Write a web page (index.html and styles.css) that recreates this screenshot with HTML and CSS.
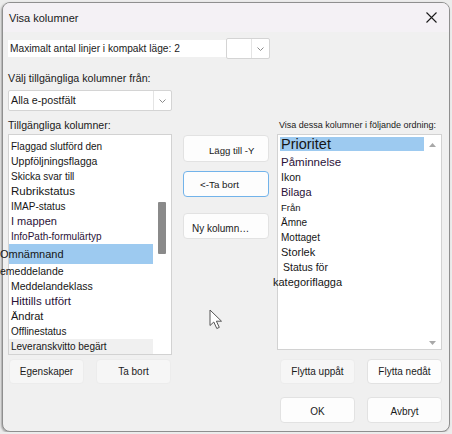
FILE: index.html
```html
<!DOCTYPE html>
<html>
<head>
  <title>Visa kolumner</title>
<link rel="stylesheet" href="styles.css">
</head>
<body>
  <div class="dialog">
    <div class="titlebar">
      <span class="title">Visa kolumner</span>
      <svg class="close" width="11" height="11" viewBox="0 0 11 11">
        <path d="M0.5 0.5 L10.5 10.5 M10.5 0.5 L0.5 10.5" stroke="#1a1a1a" stroke-width="1.1" fill="none"/>
      </svg>
    </div>

    <div class="content">
      <div class="compact-row">
        <span class="compact-label">Maximalt antal linjer i kompakt läge: 2</span>
        <div class="combo combo-small">
          <span class="combo-value"></span>
          <span class="combo-arrow">
            <svg width="7" height="4" viewBox="0 0 7 4"><path d="M0.5 0.5 L3.5 3.5 L6.5 0.5" stroke="#8a8a8a" fill="none"/></svg>
          </span>
        </div>
      </div>

      <div class="field-label">Välj tillgängliga kolumner från:</div>
      <div class="combo combo-wide">
        <span class="combo-value">Alla e-postfält</span>
        <span class="combo-arrow">
          <svg width="7" height="4" viewBox="0 0 7 4"><path d="M0.5 0.5 L3.5 3.5 L6.5 0.5" stroke="#8a8a8a" fill="none"/></svg>
        </span>
      </div>

      <div class="columns">
        <!-- available columns -->
        <div class="col-available">
          <div class="list-label">Tillgängliga kolumner:</div>
          <div class="listbox list-available">
            <div class="list-items">
              <div class="item fs10">Flaggad slutförd den</div>
              <div class="item fs105">Uppföljningsflagga</div>
              <div class="item fs10">Skicka svar till</div>
              <div class="item fs115">Rubrikstatus</div>
              <div class="item fs10">IMAP-status</div>
              <div class="item fs11 tint">I mappen</div>
              <div class="item fs10 tint">InfoPath-formulärtyp</div>
              <div class="item fs11 selected tall overhang">Omnämnand</div>
              <div class="item fs105 overhang">emeddelande</div>
              <div class="item fs105">Meddelandeklass</div>
              <div class="item fs115 tint">Hittills utfört</div>
              <div class="item fs11">Ändrat</div>
              <div class="item fs10">Offlinestatus</div>
              <div class="item fs10 hover">Leveranskvitto begärt</div>
            </div>
            <div class="scrollbar">
              <div class="thumb"></div>
            </div>
          </div>
          <div class="btn-row">
            <button class="btn btn-flat">Egenskaper</button>
            <button class="btn btn-flat">Ta bort</button>
          </div>
        </div>

        <!-- add / remove -->
        <div class="col-actions">
          <button class="btn btn-action btn-add">Lägg till -Y</button>
          <button class="btn btn-action btn-remove">&lt;-Ta bort</button>
          <button class="btn btn-action btn-new">Ny kolumn…</button>
        </div>

        <!-- shown columns -->
        <div class="col-shown">
          <div class="list-label small">Visa dessa kolumner i följande ordning:</div>
          <div class="listbox list-shown">
            <div class="list-items">
              <div class="item big selected">Prioritet</div>
              <div class="item fs115 tint">Påminnelse</div>
              <div class="item fs105">Ikon</div>
              <div class="item fs11 tint">Bilaga</div>
              <div class="item fs95">Från</div>
              <div class="item fs10">Ämne</div>
              <div class="item fs10">Mottaget</div>
              <div class="item fs11">Storlek</div>
              <div class="item fs105 indent">Status för</div>
              <div class="item fs11 overhang-right">kategoriflagga</div>
            </div>
            <div class="scrollbar arrows">
              <svg width="7" height="4" viewBox="0 0 7 4"><path d="M0 4 L3.5 0 L7 4 Z" fill="#a8a8a8"/></svg>
              <svg width="7" height="4" viewBox="0 0 7 4"><path d="M0 0 L3.5 4 L7 0 Z" fill="#a8a8a8"/></svg>
            </div>
          </div>
          <div class="btn-row">
            <button class="btn btn-flat">Flytta uppåt</button>
            <button class="btn">Flytta nedåt</button>
          </div>
          <div class="btn-row footer">
            <button class="btn btn-ok">OK</button>
            <button class="btn btn-ok">Avbryt</button>
          </div>
        </div>
      </div>
    </div>

    <svg class="cursor" width="15" height="21" viewBox="0 0 15 21">
      <path d="M1 1 L1 16.5 L4.8 13 L7.8 19.5 L10.3 18.4 L7.4 12.2 L12.5 12.2 Z" fill="#ffffff" stroke="#555555" stroke-width="1" stroke-linejoin="round"/>
    </svg>
  </div>
</body>
</html>
```

FILE: styles.css
```css
* {
  margin: 0;
  padding: 0;
  box-sizing: border-box;
}

body {
  font-family: "Liberation Sans", Arial, sans-serif;
  background-color: #ececec;
  color: #1a1a1a;
}

.dialog {
  position: relative;
  margin: 2px 0 0 2px;
  width: 448px;
  height: 430px;
  border: 1px solid #8f8f8f;
  border-radius: 8px;
  background-color: #f0f0f0;
  box-shadow: -1px 1px 2px rgba(0, 0, 0, 0.3);
}

.titlebar {
  height: 29px;
  background-color: #f4f1f5;
  border-radius: 7px 7px 0 0;
  display: flex;
  align-items: center;
  justify-content: space-between;
  padding: 0 12px 0 6px;
}

.title {
  font-size: 11px;
}

.content {
  padding: 6px 7px 0 5px;
}

/* top rows */

.compact-row {
  display: flex;
  align-items: center;
  height: 21px;
}

.compact-label {
  width: 218px;
  height: 17px;
  line-height: 17px;
  padding-left: 2px;
  background-color: #ffffff;
  font-size: 10.2px;
}

.combo {
  display: flex;
  height: 21px;
  border: 1px solid #d4d4d4;
  border-radius: 2px;
  background-color: #ffffff;
}

.combo-small {
  width: 44px;
}

.combo-wide {
  width: 164px;
  margin-top: 4px;
}

.combo-value {
  flex: 1;
  padding-left: 2px;
  font-size: 10.7px;
  line-height: 19px;
}

.combo-arrow {
  width: 18px;
  border-left: 1px solid #e4e4e4;
  display: flex;
  align-items: center;
  justify-content: center;
}

.field-label {
  margin-top: 11px;
  height: 16px;
  line-height: 16px;
  font-size: 10.7px;
}

/* three columns */

.columns {
  display: flex;
  margin-top: 6px;
}

.col-available {
  width: 164px;
}

.col-actions {
  width: 86px;
  margin-left: 11px;
  padding-top: 18px;
  display: flex;
  flex-direction: column;
}

.col-shown {
  width: 165px;
  margin-left: 8px;
}

.list-label {
  height: 17px;
  line-height: 17px;
  font-size: 10.6px;
}

.list-label.small {
  font-size: 9px;
  padding-left: 2px;
}

.listbox {
  display: flex;
  background-color: #ffffff;
  border: 1px solid #d2d2d2;
}

.list-available {
  height: 221px;
}

.list-shown {
  height: 216px;
}

.list-items {
  flex: 1;
  padding-top: 4px;
}

.list-shown .list-items {
  padding-top: 2px;
}

.item {
  height: 15px;
  line-height: 15px;
  padding-left: 2px;
  white-space: nowrap;
  color: #161616;
}

.list-shown .item {
  margin-left: 2px;
  padding-left: 1px;
}

.item.tint {
  color: #2a1238;
}

.item.selected {
  background-color: #9dcaf0;
}

.item.tall {
  height: 20px;
  line-height: 21px;
}

.item.hover {
  background-color: #f0f0f0;
}

.item.overhang {
  text-indent: -11px;
}

.item.overhang-right {
  text-indent: -8px;
}

.item.indent {
  padding-left: 3px;
}

.item.big {
  height: 14px;
  line-height: 15px;
  font-size: 14.5px;
  margin-bottom: 4px;
}

.fs95 { font-size: 9.5px; }
.fs10 { font-size: 10px; }
.fs105 { font-size: 10.5px; }
.fs11 { font-size: 11px; }
.fs115 { font-size: 11.5px; }
.fs12 { font-size: 12px; }

.scrollbar {
  width: 18px;
}

.thumb {
  width: 8px;
  height: 52px;
  margin: 67px 0 0 5px;
  background-color: #8a8a8a;
  border-radius: 1px;
}

.scrollbar.arrows {
  width: 17px;
  display: flex;
  flex-direction: column;
  align-items: center;
  justify-content: space-between;
  padding: 8px 0 4px;
}

/* buttons */

.btn {
  font-family: "Liberation Sans", Arial, sans-serif;
  font-size: 10px;
  color: #1a1a1a;
  background-color: #fdfdfd;
  border: 1px solid #e2e2e2;
  border-radius: 4px;
  width: 75px;
  height: 25px;
}

.btn-flat {
  background-color: #f6f6f6;
  border-color: #ececec;
}

.btn-row {
  display: flex;
  gap: 12px;
  margin-top: 4px;
  padding-left: 1px;
}

.col-shown .btn-row {
  margin-top: 9px;
  padding-left: 3px;
}

.col-shown .btn-row.footer {
  margin-top: 13px;
}

.btn-ok {
  height: 26px;
  padding-top: 3px;
}

.btn-action {
  width: 86px;
  height: 26px;
  text-align: left;
  font-size: 9.8px;
}

.btn-add {
  height: 27px;
  padding: 4px 0 0 25px;
  font-size: 9.6px;
}

.btn-remove {
  margin-top: 9px;
  padding: 1px 0 0 16px;
  border-color: #72b3ea;
}

.btn-new {
  margin-top: 16px;
  padding: 4px 0 0 8px;
  font-size: 10px;
}

.cursor {
  position: absolute;
  left: 206px;
  top: 306px;
}
```
